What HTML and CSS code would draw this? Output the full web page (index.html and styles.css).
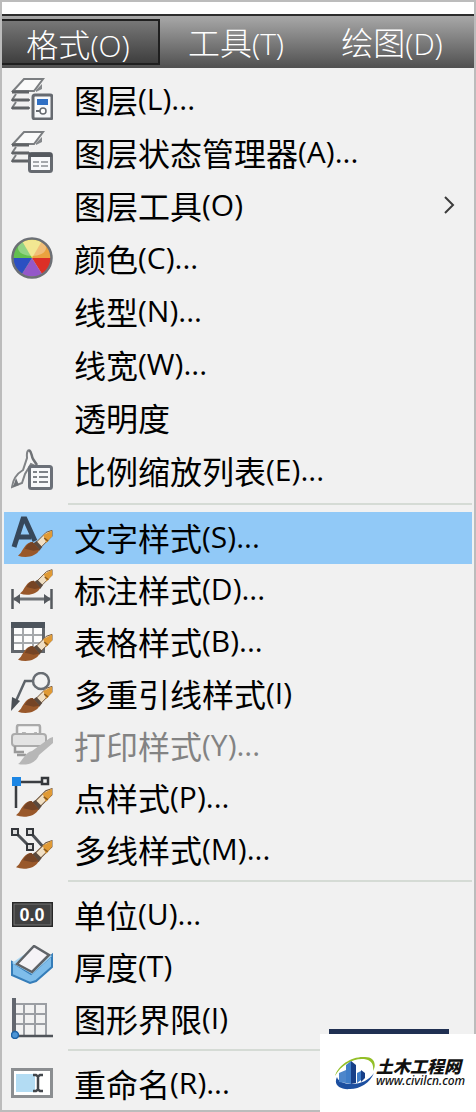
FILE: index.html
```html
<!DOCTYPE html>
<html lang="zh-CN">
<head>
  <meta charset="UTF-8">
  <meta name="viewport" content="width=device-width, initial-scale=1.0">
  <title>格式</title>
  <link rel="stylesheet" href="styles.css">
</head>
<body>
  <!-- shared icon parts -->
  <svg class="defs" width="0" height="0" aria-hidden="true">
    <symbol id="brush" viewBox="0 0 36 28">
      <path d="M18 13 29 2l6-2v6L23 18z" fill="#f0dfc4" stroke="#6d5238" stroke-width="1"/>
      <path d="M26 5 35 0v6l-6 7z" fill="#e09a35"/>
      <path d="M27 8l4 3" stroke="#8a5a1c" stroke-width="1.5"/>
      <path d="M19 11l6 6-3 4-7-7z" fill="#5b4a3e"/>
      <path d="M15 12c-6 0-9 6-12 11l-3 3c8 3 19 1 22-6z" fill="#99582a"/>
      <path d="M15 12c-3 0-6 3-8 7l9 2 6-1z" fill="#754425"/>
    </symbol>
    <symbol id="layers" viewBox="0 0 42 42">
      <path d="M2 13 13 1h19l-9 12z" fill="#fafafa" stroke="#7b7e81" stroke-width="2"/>
      <path d="M25 12l6-6v5l-6 3z" fill="#85888b"/>
      <path d="M5 16l-4 6h18M5 24l-4 6h18" fill="none" stroke="#7b7e81" stroke-width="2"/>
      <path d="M1 14h17M1 22h17M1 30h17" stroke="#606366" stroke-width="3"/>
    </symbol>
  </svg>

  <div class="window">
    <nav class="menubar">
      <button class="tab active">格式<span>(O)</span></button>
      <button class="tab">工具<span>(T)</span></button>
      <button class="tab">绘图<span>(D)</span></button>
    </nav>

    <div class="menu">
      <div class="group">
        <button class="item">
          <svg class="icon" viewBox="0 0 42 42">
            <use href="#layers"/>
            <rect x="22" y="17" width="19" height="24" rx="2" fill="#f7f8fa" stroke="#666a70" stroke-width="3"/>
            <rect x="26" y="21" width="11" height="6" fill="#2f6fc4"/>
            <path d="M25 33h7" stroke="#666a70" stroke-width="2"/>
            <circle cx="32" cy="33" r="3" fill="#fff" stroke="#666a70" stroke-width="1.5"/>
          </svg>
          图层<span>(L)...</span>
        </button>
        <button class="item">
          <svg class="icon" viewBox="0 0 42 42">
            <use href="#layers"/>
            <rect x="18.500" y="22.500" width="22" height="18" rx="2" fill="#f7f8fa" stroke="#666a70" stroke-width="3"/>
            <path d="M18 24h23" stroke="#55595f" stroke-width="4"/>
            <path d="M22 31h6m2 0h7M22 35h6m2 0h7" stroke="#a5a8ac" stroke-width="2"/>
          </svg>
          图层状态管理器<span>(A)...</span>
        </button>
        <button class="item">
          图层工具<span>(O)</span>
          <svg class="arrow" viewBox="0 0 12 20"><path d="M2 2l8 8-8 8" fill="none" stroke="#3c3c3c" stroke-width="2"/></svg>
        </button>
        <button class="item">
          <svg class="icon" viewBox="0 0 42 42">
            <circle cx="21" cy="21" r="20" fill="#e8d765"/>
            <path d="M21 21 11 4a19 19 0 0 1 20 0z" fill="#ecdd63"/>
            <path d="M21 21 31 4a19 19 0 0 1 9 17z" fill="#eba33f"/>
            <path d="M21 21h19a19 19 0 0 1-9 16z" fill="#dc2f26"/>
            <path d="M21 21 31 37a19 19 0 0 1-20 0z" fill="#9458c9"/>
            <path d="M21 21 11 37a19 19 0 0 1-9-16z" fill="#2c50c2"/>
            <path d="M21 21H2a19 19 0 0 1 9-17z" fill="#63c04f"/>
            <ellipse cx="21" cy="11" rx="14" ry="8" fill="#fff" opacity=".3"/>
            <circle cx="21" cy="21" r="19.500" fill="none" stroke="#6c7076" stroke-width="2.500"/>
          </svg>
          颜色<span>(C)...</span>
        </button>
        <button class="item">线型<span>(N)...</span></button>
        <button class="item">线宽<span>(W)...</span></button>
        <button class="item">透明度</button>
        <button class="item">
          <svg class="icon" viewBox="0 0 42 42">
            <path d="M18 1c-3 1-2 5-2 8l-4 12c-5 3-10 9-11 17l10-4 3-9 6-10 4 2" fill="#f6f6f6" stroke="#808386" stroke-width="2"/>
            <path d="M18 1c3 2 2 5 4 9l4 6" fill="none" stroke="#6f7276" stroke-width="2.500"/>
            <path d="M2 38l3-9 3 7z" fill="#6f7276"/>
            <rect x="18.500" y="17.500" width="22" height="22" rx="2" fill="#f7f8fa" stroke="#6b7078" stroke-width="3"/>
            <path d="M22 23h4m2 0h9M22 28h4m2 0h9M22 33h4m2 0h9" stroke="#7e8288" stroke-width="2"/>
          </svg>
          比例缩放列表<span>(E)...</span>
        </button>
      </div>

      <div class="group">
        <button class="item selected">
          <svg class="icon" viewBox="0 0 42 42">
            <path d="M3 31 12 3h2l10 22M7 21h13" fill="none" stroke="#36475a" stroke-width="5"/>
            <use href="#brush" x="7" y="14" width="35" height="28"/>
          </svg>
          文字样式<span>(S)...</span>
        </button>
        <button class="item">
          <svg class="icon" viewBox="0 0 42 42">
            <path d="M1.500 21v20M40.500 21v20" stroke="#55595e" stroke-width="2.500"/>
            <path d="M2 31h38" stroke="#6f7377" stroke-width="3"/>
            <path d="M2 31l7-5v10zM40 31l-7-5v10z" fill="#55595e"/>
            <use href="#brush" x="9" y="1" width="33" height="27"/>
          </svg>
          标注样式<span>(D)...</span>
        </button>
        <button class="item">
          <svg class="icon" viewBox="0 0 42 42">
            <rect x="1.500" y="3.500" width="31" height="28" fill="#fdfdfd" stroke="#62666b" stroke-width="3"/>
            <path d="M0 5h34" stroke="#4d545c" stroke-width="6"/>
            <path d="M3 15h28M3 23h28M12 8v22M22 8v22" stroke="#a5a8ab" stroke-width="2"/>
            <use href="#brush" x="7" y="14" width="35" height="28"/>
          </svg>
          表格样式<span>(B)...</span>
        </button>
        <button class="item">
          <svg class="icon" viewBox="0 0 42 42">
            <path d="M5 29 14 9h8" fill="none" stroke="#5d6369" stroke-width="2.500"/>
            <path d="M0 39l1-14 8 4z" fill="#4a5056"/>
            <circle cx="30" cy="9" r="8" fill="#f3f3f3" stroke="#686d73" stroke-width="2.500"/>
            <use href="#brush" x="7" y="14" width="35" height="28"/>
          </svg>
          多重引线样式<span>(I)</span>
        </button>
        <button class="item" disabled>
          <svg class="icon" viewBox="0 0 42 42">
            <path d="M6 11V3q0-2 2-2h19q2 0 2 2v8" fill="#f5f5f5" stroke="#aaa" stroke-width="2.500"/>
            <path d="M11 9h3l2 3h6l2-3h2" fill="none" stroke="#b5b5b5" stroke-width="2"/>
            <rect x="1" y="10" width="34" height="12" rx="3" fill="#e3e3e3" stroke="#ababab" stroke-width="2"/>
            <path d="M4 22v6h9M6 31h9" fill="none" stroke="#999" stroke-width="2.500"/>
            <path d="M7 40c4-2 7-12 14-13L39 14l3-1v6L28 31c-3 8-12 11-21 9z" fill="#b7b7b7"/>
          </svg>
          打印样式<span>(Y)...</span>
        </button>
        <button class="item">
          <svg class="icon" viewBox="0 0 42 42">
            <path d="M5 6h28M5 6v26" stroke="#3b3e42" stroke-width="2.500"/>
            <rect x="1" y="1" width="9" height="9" fill="#1c86e4"/>
            <rect x="31" y="2" width="6" height="6" fill="#eee" stroke="#34373b" stroke-width="2.500"/>
            <use href="#brush" x="5" y="12" width="37" height="30"/>
          </svg>
          点样式<span>(P)...</span>
        </button>
        <button class="item">
          <svg class="icon" viewBox="0 0 42 42">
            <path d="M4 4l15 15M19 4l15 17" stroke="#4d5156" stroke-width="3"/>
            <g fill="#ddd" stroke="#34373b" stroke-width="2">
              <rect x="1" y="1" width="6" height="6"/>
              <rect x="16" y="1" width="6" height="6"/>
              <rect x="16" y="16" width="6" height="6"/>
            </g>
            <use href="#brush" x="5" y="12" width="37" height="30"/>
          </svg>
          多线样式<span>(M)...</span>
        </button>
      </div>

      <div class="group">
        <button class="item">
          <svg class="icon" viewBox="0 0 42 42">
            <rect x="1" y="9" width="41" height="25" fill="#272727"/>
            <rect x="3" y="11" width="37" height="21" fill="#414141" stroke="#777" stroke-width="1"/>
            <text class="digits" x="21" y="28" text-anchor="middle">0.0</text>
          </svg>
          单位<span>(U)...</span>
        </button>
        <button class="item">
          <svg class="icon" viewBox="0 0 42 42">
            <path d="M1 17v13l18 8 6-2 16-14V10L20 29z" fill="#7fbdea" stroke="#357db9" stroke-width="2"/>
            <path d="M1 18 24 2l17 9-20 18z" fill="#a9d6f3"/>
            <path d="M6 19 23 1l15 9-17 17z" fill="#f5f3f7" stroke="#5f6368" stroke-width="2.500"/>
          </svg>
          厚度<span>(T)</span>
        </button>
        <button class="item">
          <svg class="icon" viewBox="0 0 42 42">
            <path d="M3 7h32v32M3 17h32M3 27h32M13 7v31M24 7v31" fill="none" stroke="#9b9ea3" stroke-width="2"/>
            <path d="M3 1v37" stroke="#62666e" stroke-width="4"/>
            <path d="M3 39h39" stroke="#4f5359" stroke-width="2.500"/>
            <circle cx="4" cy="38" r="3.500" fill="#4c95d6" stroke="#1e63a5" stroke-width="1.500"/>
          </svg>
          图形界限<span>(I)</span>
        </button>
      </div>

      <div class="group">
        <button class="item">
          <svg class="icon" viewBox="0 0 42 42">
            <rect x="1.500" y="7.500" width="39" height="27" fill="#fff" stroke="#8b8e91" stroke-width="3"/>
            <rect x="5" y="12" width="19" height="18" fill="#b3dcf3"/>
            <path d="M22 13h3l2 1.500 2-1.500h3M27 13v16M22 29h3l2-1.500 2 1.500h3" fill="none" stroke="#43474c" stroke-width="2.500"/>
          </svg>
          重命名<span>(R)...</span>
        </button>
      </div>
    </div>
  </div>

  <div class="watermark">
    <div class="stripe"></div>
    <a class="site" href="#">
      <svg class="logo" viewBox="0 0 42 34">
        <path d="M1 20C4 9 18 0 31 1c9 0 12 7 8 14 1-7-2-11-9-12C19 2 7 9 1 20z" fill="#93bf27"/>
        <path d="M3 21c-4 8 3 13 13 12 10 0 20-6 24-16-5 7-13 11-22 11C9 28 4 25 3 21z" fill="#1c4fa0"/>
        <path d="M5 17l7-3v13l-7-1z" fill="#4d86cb"/>
        <path d="M12 9l5-4v23l-5-1zM23 17l4-2v9l-4 3z" fill="#3f7dc8"/>
        <path d="M17 5l5 4v18l-5 1zM27 14l4 3v5l-4 4z" fill="#173f88"/>
      </svg>
      <span class="brand">
        <strong>土木工程网</strong>
        <em>www.civilcn.com</em>
      </span>
    </a>
  </div>
</body>
</html>
```

FILE: styles.css
```css
* {
  box-sizing: border-box;
}

body {
  margin: 0;
  background: #f1f1f1;
  font-family: "Open Sans", "Noto Sans CJK SC", sans-serif;
}

button {
  border: none;
  background: none;
  padding: 0;
  color: inherit;
  font-family: "Noto Sans CJK SC", sans-serif;
  font-size: 32px;
  font-weight: 400;
  line-height: 44px;
  white-space: nowrap;
  cursor: pointer;
}

button span {
  font-family: "Open Sans", sans-serif;
  font-size: 30px;
}

.defs {
  position: absolute;
}

.window {
  border: 2px solid #bcbcbc;
  background: #f1f1f1;
}

.menubar {
  display: flex;
  align-items: center;
  margin-top: 12px;
  height: 54px;
  border-top: 2px solid #2d2d2d;
  background: linear-gradient(#a8a8a8, #505050);
  color: #fff;
  box-shadow: 0 -12px #fff;
}

.tab {
  height: 46px;
  width: 158px;
  padding-right: 4px;
  padding-bottom: 4px;
  font-weight: 300;
}

.tab.active {
  border: 2px solid #1f1f1f;
  border-left: none;
  background: linear-gradient(#777, #3e3e3e);
}

.tab + .tab {
  width: 156px;
}

.menu {
  padding: 5px 2px 0;
  color: #000;
}

.group {
  display: flex;
  flex-direction: column;
}

.group + .group {
  margin-top: 4px;
}

.group:first-child {
  margin-bottom: 6px;
}

.group + .group::before {
  content: "";
  height: 2px;
  margin: 0 0 7px 64px;
  background: #d5dbd5;
}

.group:first-child + .group {
  margin-top: 0;
}

.item {
  display: flex;
  align-items: center;
  height: 52px;
  padding-left: 70px;
  padding-bottom: 2px;
  text-align: left;
}

.group:first-child .item {
  height: 53px;
}

.item.selected {
  background: #91c9f7;
}

.item:disabled {
  color: #838383;
}

.icon {
  width: 42px;
  height: 42px;
  margin-left: -63px;
  margin-right: 21px;
}

.arrow {
  width: 12px;
  height: 20px;
  margin-left: auto;
  margin-right: 17px;
}

.digits {
  font: bold 18px "Liberation Sans", sans-serif;
  fill: #fff;
}

.watermark {
  position: absolute;
  right: 0;
  top: 1029px;
  width: 156px;
}

.stripe {
  height: 5px;
  margin: 0 27px 0 9px;
  background: #203052;
}

.site {
  display: flex;
  align-items: center;
  height: 78px;
  padding-left: 14px;
  background: #fff;
  color: #111;
  text-decoration: none;
}

.logo {
  width: 42px;
  height: 34px;
}

.brand {
  display: flex;
  flex-direction: column;
}

.brand strong {
  font-family: "Noto Sans CJK SC", sans-serif;
  font-size: 17px;
  font-style: italic;
  font-weight: 900;
  line-height: 16px;
  white-space: nowrap;
}

.brand em {
  font-family: "Noto Sans", sans-serif;
  font-size: 12px;
  font-weight: 500;
  line-height: 14px;
}
```
